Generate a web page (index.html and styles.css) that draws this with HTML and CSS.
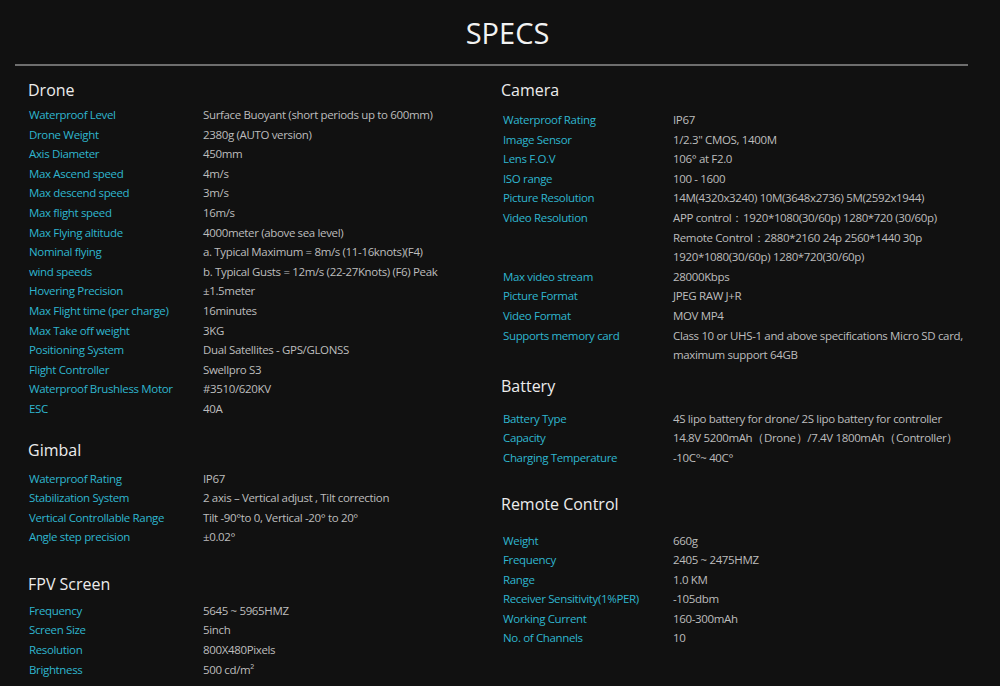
FILE: index.html
```html
<!DOCTYPE html>
<html lang="en">
<head>
<meta charset="utf-8">
<title>Specs</title>
<link rel="stylesheet" href="styles.css">
</head>
<body>
<div class="page">
  <header class="title-bar"><h1 class="title">SPECS</h1></header>
  <div class="columns">
    <div class="col col-left">
      <section class="sec sec-drone">
        <h2 class="sec-title">Drone</h2>
        <dl class="specs">
          <dt>Waterproof Level</dt><dd>Surface Buoyant (short periods up to 600mm)</dd>
          <dt>Drone Weight</dt><dd>2380g (AUTO version)</dd>
          <dt>Axis Diameter</dt><dd>450mm</dd>
          <dt>Max Ascend speed</dt><dd>4m/s</dd>
          <dt>Max descend speed</dt><dd>3m/s</dd>
          <dt>Max flight speed</dt><dd>16m/s</dd>
          <dt>Max Flying altitude</dt><dd>4000meter (above sea level)</dd>
          <dt>Nominal flying<br>wind speeds</dt><dd>a. Typical Maximum = 8m/s (11-16knots)(F4)<br>b. Typical Gusts = 12m/s (22-27Knots) (F6) Peak</dd>
          <dt>Hovering Precision</dt><dd>±1.5meter</dd>
          <dt>Max Flight time (per charge)</dt><dd>16minutes</dd>
          <dt>Max Take off weight</dt><dd>3KG</dd>
          <dt>Positioning System</dt><dd>Dual Satellites - GPS/GLONSS</dd>
          <dt>Flight Controller</dt><dd>Swellpro S3</dd>
          <dt>Waterproof Brushless Motor</dt><dd>#3510/620KV</dd>
          <dt>ESC</dt><dd>40A</dd>
        </dl>
      </section>
      <section class="sec sec-gimbal">
        <h2 class="sec-title">Gimbal</h2>
        <dl class="specs">
          <dt>Waterproof Rating</dt><dd>IP67</dd>
          <dt>Stabilization System</dt><dd>2 axis – Vertical adjust , Tilt correction</dd>
          <dt>Vertical Controllable Range</dt><dd>Tilt -90°to 0, Vertical -20° to 20°</dd>
          <dt>Angle step precision</dt><dd>±0.02°</dd>
        </dl>
      </section>
      <section class="sec sec-fpv">
        <h2 class="sec-title">FPV Screen</h2>
        <dl class="specs">
          <dt>Frequency</dt><dd>5645 ~ 5965HMZ</dd>
          <dt>Screen Size</dt><dd>5inch</dd>
          <dt>Resolution</dt><dd>800X480Pixels</dd>
          <dt>Brightness</dt><dd>500 cd/m²</dd>
        </dl>
      </section>
    </div>
    <div class="col col-right">
      <section class="sec sec-camera">
        <h2 class="sec-title">Camera</h2>
        <dl class="specs">
          <dt>Waterproof Rating</dt><dd>IP67</dd>
          <dt>Image Sensor</dt><dd>1/2.3" CMOS, 1400M</dd>
          <dt>Lens F.O.V</dt><dd>106° at F2.0</dd>
          <dt>ISO range</dt><dd>100 - 1600</dd>
          <dt>Picture Resolution</dt><dd>14M(4320x3240) 10M(3648x2736) 5M(2592x1944)</dd>
          <dt>Video Resolution</dt><dd>APP control：1920*1080(30/60p) 1280*720 (30/60p)<br>Remote Control：2880*2160 24p 2560*1440 30p<br>1920*1080(30/60p) 1280*720(30/60p)</dd>
          <dt>Max video stream</dt><dd>28000Kbps</dd>
          <dt>Picture Format</dt><dd>JPEG RAW J+R</dd>
          <dt>Video Format</dt><dd>MOV MP4</dd>
          <dt>Supports memory card</dt><dd>Class 10 or UHS-1 and above specifications Micro SD card,<br>maximum support 64GB</dd>
        </dl>
      </section>
      <section class="sec sec-battery">
        <h2 class="sec-title">Battery</h2>
        <dl class="specs">
          <dt>Battery Type</dt><dd>4S lipo battery for drone/ 2S lipo battery for controller</dd>
          <dt>Capacity</dt><dd>14.8V 5200mAh（Drone）/7.4V 1800mAh（Controller）</dd>
          <dt>Charging Temperature</dt><dd>-10C°~ 40C°</dd>
        </dl>
      </section>
      <section class="sec sec-remote">
        <h2 class="sec-title">Remote Control</h2>
        <dl class="specs">
          <dt>Weight</dt><dd>660g</dd>
          <dt>Frequency</dt><dd>2405 ~ 2475HMZ</dd>
          <dt>Range</dt><dd>1.0 KM</dd>
          <dt>Receiver Sensitivity(1%PER)</dt><dd>-105dbm</dd>
          <dt>Working Current</dt><dd>160-300mAh</dd>
          <dt>No. of Channels</dt><dd>10</dd>
        </dl>
      </section>
    </div>
  </div>
</div>
</body>
</html>
```
FILE: styles.css
```css
* { box-sizing: border-box; }
html, body { margin: 0; padding: 0; }
body {
  background: #111111;
  font-family: "Open Sans", "Noto Sans", "Liberation Sans", sans-serif;
  color: #bdbdbd;
  width: 1000px;
  height: 686px;
  overflow: hidden;
}
.page { padding: 0 32px 0 15px; }
.title-bar {
  border-bottom: 2px solid #6e6e6e;
  height: 66px;
  display: flex;
  align-items: center;
  justify-content: center;
  padding: 0 0 0 32px;
}
.title {
  margin: 0;
  font-size: 29px;
  font-weight: 400;
  color: #f2f2f2;
}
.columns {
  display: grid;
  grid-template-columns: 473px 1fr;
  padding-left: 13px;
}
.sec-title {
  margin: 0;
  font-size: 16px;
  font-weight: 400;
  color: #ececec;
  line-height: 20px;
}
.specs {
  margin: 0;
  display: grid;
  grid-template-columns: 175px 1fr;
  font-size: 11.5px;
  line-height: 19.6px;
  letter-spacing: -0.35px;
}
.col-right .specs { grid-template-columns: 172px 1fr; }
.specs dt { color: #2fb6cf; padding-left: 1px; }
.col-right .specs dt { padding-left: 2px; }
.specs dd { margin: 0; color: #bdbdbd; white-space: nowrap; }
.col-left .sec-drone { padding-top: 14px; }
.col-left .sec-drone .sec-title { margin-bottom: 5px; }
.col-left .sec-gimbal { padding-top: 21px; }
.col-left .sec-gimbal .sec-title { margin-bottom: 9px; }
.col-left .sec-fpv { padding-top: 27px; }
.col-left .sec-fpv .sec-title { margin-bottom: 7px; }
.col-right .sec-camera { padding-top: 14px; }
.col-right .sec-camera .sec-title { margin-bottom: 10px; }
.col-right .sec-battery { padding-top: 11px; }
.col-right .sec-battery .sec-title { margin-bottom: 13px; }
.col-right .sec-remote { padding-top: 26px; }
.col-right .sec-remote .sec-title { margin-bottom: 17px; }
```
